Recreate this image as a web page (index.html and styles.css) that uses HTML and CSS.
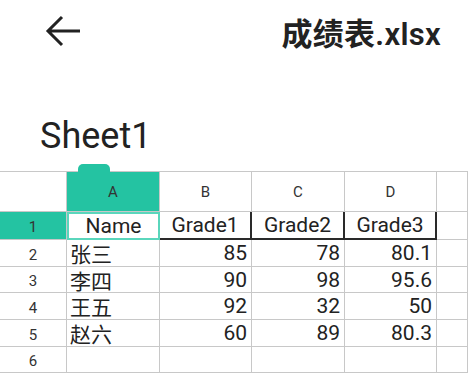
FILE: index.html
```html
<!DOCTYPE html>
<html lang="zh">
<head>
    <meta charset="UTF-8">
    <meta name="viewport" content="width=device-width, initial-scale=1.0">
    <title>成绩表.xlsx</title>
    <link rel="stylesheet" href="styles.css">
</head>
<body>
    <header class="top-bar">
        <svg class="back-icon" viewBox="0 0 36 32" width="36" height="32">
            <path d="M3 16 H35 M17 2 L3 16 L17 30" fill="none" stroke="#222" stroke-width="3" />
        </svg>
        <h1 class="file-name">成绩表.xlsx</h1>
    </header>

    <h2 class="sheet-name">Sheet1</h2>

    <div class="sheet">
        <!-- column headers -->
        <div class="cell corner"></div>
        <div class="cell col-head active"><span class="handle"></span>A</div>
        <div class="cell col-head">B</div>
        <div class="cell col-head">C</div>
        <div class="cell col-head">D</div>
        <div class="cell col-head"></div>

        <!-- row 1 -->
        <div class="cell row-head active">1</div>
        <div class="cell text center selected">Name</div>
        <div class="cell text center boxed">Grade1</div>
        <div class="cell text center boxed">Grade2</div>
        <div class="cell text center boxed">Grade3</div>
        <div class="cell"></div>

        <!-- row 2 -->
        <div class="cell row-head">2</div>
        <div class="cell text">张三</div>
        <div class="cell text num">85</div>
        <div class="cell text num">78</div>
        <div class="cell text num">80.1</div>
        <div class="cell"></div>

        <!-- row 3 -->
        <div class="cell row-head">3</div>
        <div class="cell text">李四</div>
        <div class="cell text num">90</div>
        <div class="cell text num">98</div>
        <div class="cell text num">95.6</div>
        <div class="cell"></div>

        <!-- row 4 -->
        <div class="cell row-head">4</div>
        <div class="cell text">王五</div>
        <div class="cell text num">92</div>
        <div class="cell text num">32</div>
        <div class="cell text num">50</div>
        <div class="cell"></div>

        <!-- row 5 -->
        <div class="cell row-head">5</div>
        <div class="cell text">赵六</div>
        <div class="cell text num">60</div>
        <div class="cell text num">89</div>
        <div class="cell text num">80.3</div>
        <div class="cell"></div>

        <!-- row 6 -->
        <div class="cell row-head">6</div>
        <div class="cell"></div>
        <div class="cell"></div>
        <div class="cell"></div>
        <div class="cell"></div>
        <div class="cell"></div>
    </div>
</body>
</html>
```

FILE: styles.css
```css
body {
    margin: 0;
    background: #fff;
    color: #222;
    font-family: Roboto, "Noto Sans CJK SC", sans-serif;
    overflow: hidden;
}

.top-bar {
    height: 62px;
    display: flex;
    align-items: center;
    justify-content: space-between;
    padding: 0 27px 0 45px;
}

.back-icon {
    display: block;
}

.file-name {
    margin: 0;
    font-size: 31px;
    font-weight: 600;
    color: #222;
    letter-spacing: 0.3px;
}

.sheet-name {
    margin: 52px 0 13px 40px;
    font-size: 36px;
    line-height: 44px;
    font-weight: normal;
    color: #222;
}

.sheet {
    display: grid;
    grid-template-columns: 67px 93px 92px 93px 92px 1fr;
    grid-template-rows: 40px 28px 27px 26px 27px 27px 26px;
    border-top: 1px solid #c8c8c8;
}

.cell {
    position: relative;
    border-right: 1px solid #c8c8c8;
    border-bottom: 1px solid #c8c8c8;
    display: flex;
    align-items: center;
    box-sizing: border-box;
}

.col-head {
    justify-content: center;
    font-size: 15px;
    color: #333;
}

.row-head {
    justify-content: center;
    font-size: 15px;
    color: #333;
    padding-top: 3px;
}

.active {
    background: #24c3a2;
}

.handle {
    position: absolute;
    top: -8px;
    left: 11px;
    width: 32px;
    height: 8px;
    border-radius: 5px 5px 0 0;
    background: #24c3a2;
}

.text {
    font-size: 21px;
    padding: 0 3px;
}

.center {
    justify-content: center;
}

.num {
    justify-content: flex-end;
    padding-right: 4px;
}

.selected {
    border: 2px solid #5ad6bc;
}

.boxed {
    border-right: 2px solid #2a2a2a;
    border-bottom: 2px solid #2a2a2a;
}
```
